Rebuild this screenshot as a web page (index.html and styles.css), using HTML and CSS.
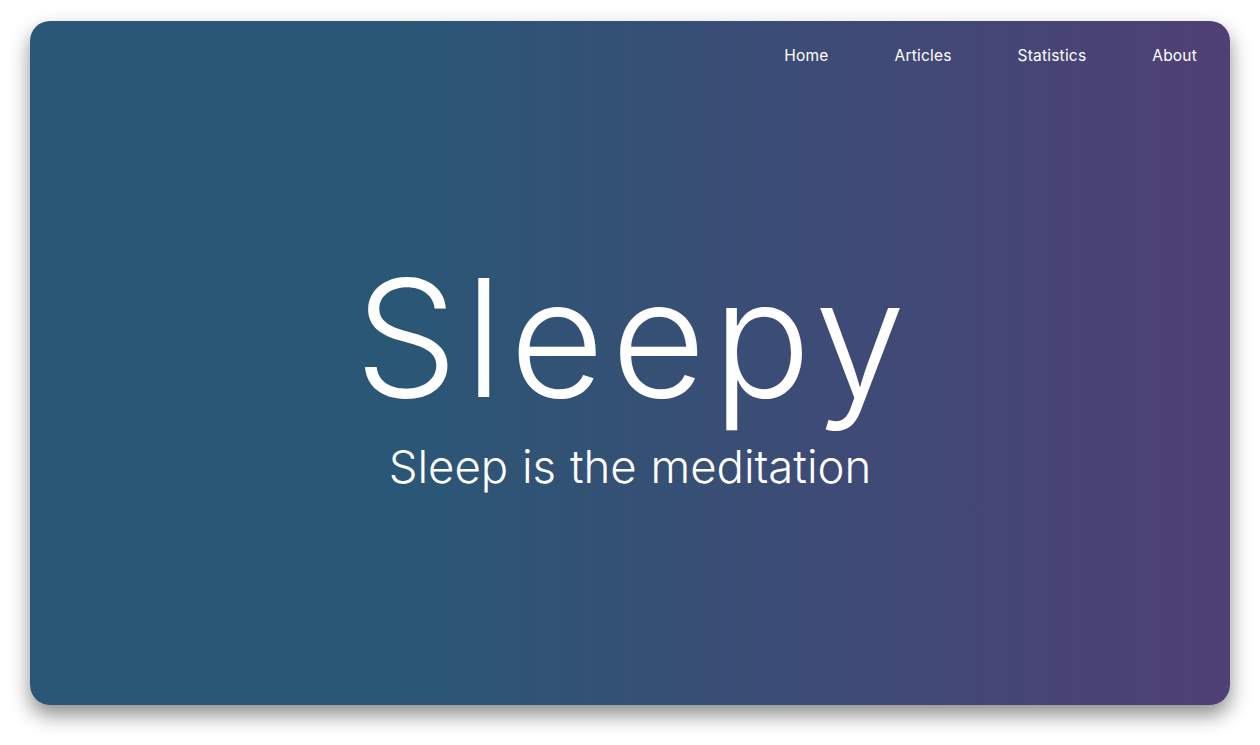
FILE: index.html
```html
<!DOCTYPE html>
<html lang="en">
<head>
<meta charset="utf-8">
<title>Sleepy</title>
<link rel="stylesheet" href="styles.css">
</head>
<body>
<main class="card">
  <nav class="nav">
    <a class="nav-link" href="#">Home</a>
    <a class="nav-link" href="#">Articles</a>
    <a class="nav-link" href="#">Statistics</a>
    <a class="nav-link" href="#">About</a>
  </nav>
  <section class="hero">
    <h1 class="title">Sleepy</h1>
    <p class="subtitle">Sleep is the meditation</p>
  </section>
</main>
</body>
</html>
```
FILE: styles.css
```css
html, body {
  margin: 0;
  padding: 0;
  background: #ffffff;
}
body {
  padding: 21px 30px 40px;
  font-family: "Inter", "Noto Sans", sans-serif;
  color: #ffffff;
}
.card {
  height: 684px;
  border-radius: 20px;
  background: linear-gradient(90deg, #2a5775 0%, #2a5775 30%, #4f4076 100%);
  box-shadow: 0 10px 20px rgba(0, 0, 0, 0.45);
  display: flex;
  flex-direction: column;
  overflow: hidden;
}
.nav {
  display: flex;
  justify-content: flex-end;
  gap: 66px;
  padding: 25px 33px 0 0;
  height: 45px;
}
.nav-link {
  color: #ffffff;
  text-decoration: none;
  font-size: 15.5px;
  line-height: 20px;
  letter-spacing: 0.2px;
}
.hero {
  flex: 1;
  display: flex;
  flex-direction: column;
  align-items: center;
  justify-content: center;
  padding-bottom: 46px;
}
.title {
  margin: 0 0 21px;
  padding-left: 7px;
  font-size: 163px;
  font-weight: 300;
  line-height: 1;
  letter-spacing: 7px;
}
.subtitle {
  margin: 0;
  font-size: 45.5px;
  font-weight: 300;
  line-height: 1.2;
  letter-spacing: 0;
  word-spacing: 1px;
}
```
